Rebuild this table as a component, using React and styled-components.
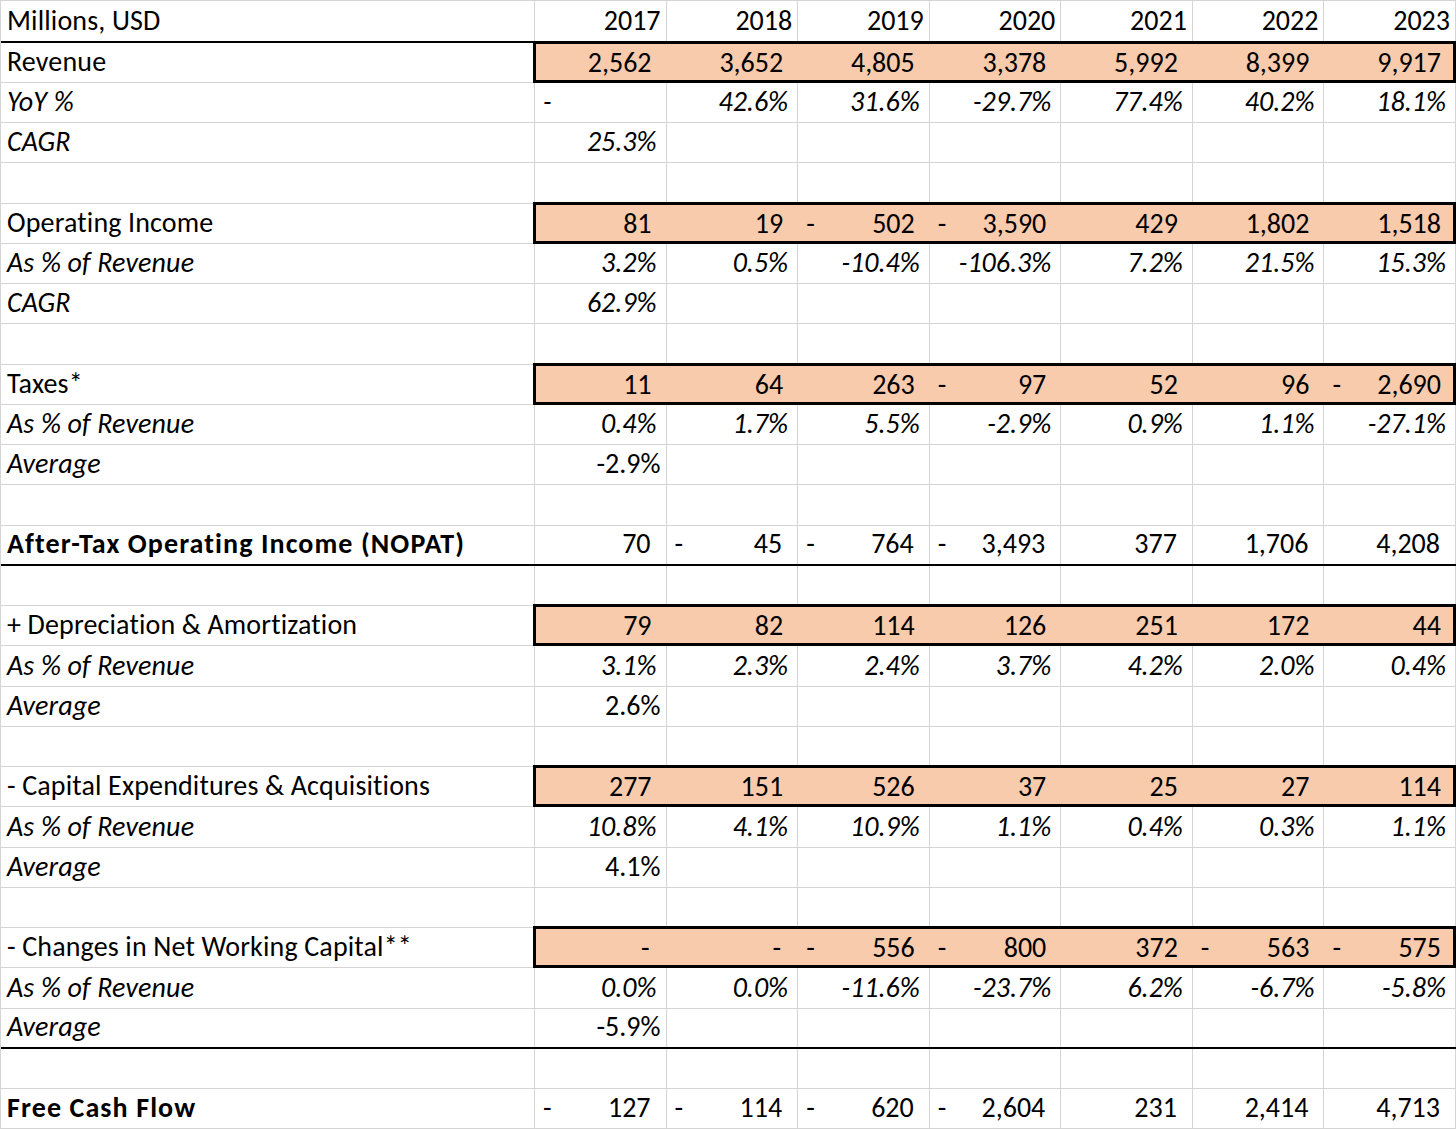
import React from "react";
import styled, { createGlobalStyle } from "styled-components";

const GRID = "#d4d4d4";
const PEACH = "#f8cbad";

const GlobalStyle = createGlobalStyle`
  html, body {
    margin: 0;
    padding: 0;
    background: #fff;
  }
  body {
    font-family: Carlito, Lato, "Open Sans", sans-serif;
    color: #000;
  }
`;

const Sheet = styled.div`
  width: 1456px;
  border-top: 1px solid ${GRID};
  border-left: 1px solid ${GRID};
  box-sizing: border-box;
  font-size: 28px;
`;

const Row = styled.div`
  display: grid;
  grid-template-columns: 534px repeat(7, 1fr);
  height: ${({ $first }) => ($first ? "41.5px" : "40.25px")};
  box-sizing: border-box;
  border-bottom: ${({ $rule }) => ($rule ? "2px solid #000" : `1px solid ${GRID}`)};
`;

const Label = styled.div`
  display: flex;
  align-items: flex-end;
  padding: 0 0 3px 6px;
  border-right: 1px solid ${GRID};
  font-style: ${({ $italic }) => ($italic ? "italic" : "normal")};
  font-weight: ${({ $bold }) => ($bold ? 700 : 400)};
  letter-spacing: ${({ $bold }) => ($bold ? "1.1px" : "0.15px")};
  white-space: nowrap;
`;

const Box = styled.div`
  grid-column: 2 / -1;
  display: grid;
  grid-template-columns: repeat(7, 1fr);
  background: ${PEACH};
  box-shadow: inset 0 0 0 3px #000;
  margin: -2px 0 -1px -2px;
  padding-left: 2px;
`;

const Cell = styled.div`
  display: flex;
  align-items: flex-end;
  justify-content: ${({ $split }) => ($split ? "space-between" : "flex-end")};
  padding: 0 ${({ $right }) => $right}px 3px 8px;
  border-right: ${({ $plain }) => ($plain ? "none" : `1px solid ${GRID}`)};
  font-style: ${({ $italic }) => ($italic ? "italic" : "normal")};
  white-space: nowrap;
  overflow: hidden;
`;

const years = ["2017", "2018", "2019", "2020", "2021", "2022", "2023"];

const rows = [
  { label: "Millions, USD", kind: "year", values: years, rule: true, first: true },
  { label: "Revenue", kind: "acct", box: true, values: ["2,562", "3,652", "4,805", "3,378", "5,992", "8,399", "9,917"] },
  { label: "YoY %", italic: true, kind: "pct", values: ["-", "42.6%", "31.6%", "-29.7%", "77.4%", "40.2%", "18.1%"] },
  { label: "CAGR", italic: true, kind: "pct", values: ["25.3%"] },
  { blank: true },
  { label: "Operating Income", kind: "acct", box: true, values: ["81", "19", "-502", "-3,590", "429", "1,802", "1,518"] },
  { label: "As % of Revenue", italic: true, kind: "pct", values: ["3.2%", "0.5%", "-10.4%", "-106.3%", "7.2%", "21.5%", "15.3%"] },
  { label: "CAGR", italic: true, kind: "pct", values: ["62.9%"] },
  { blank: true },
  { label: "Taxes*", kind: "acct", box: true, values: ["11", "64", "263", "-97", "52", "96", "-2,690"] },
  { label: "As % of Revenue", italic: true, kind: "pct", values: ["0.4%", "1.7%", "5.5%", "-2.9%", "0.9%", "1.1%", "-27.1%"] },
  { label: "Average", italic: true, kind: "avg", values: ["-2.9%"] },
  { blank: true },
  { label: "After-Tax Operating Income (NOPAT)", bold: true, kind: "acct", rule: true, values: ["70", "-45", "-764", "-3,493", "377", "1,706", "4,208"] },
  { blank: true },
  { label: "+ Depreciation & Amortization", kind: "acct", box: true, values: ["79", "82", "114", "126", "251", "172", "44"] },
  { label: "As % of Revenue", italic: true, kind: "pct", values: ["3.1%", "2.3%", "2.4%", "3.7%", "4.2%", "2.0%", "0.4%"] },
  { label: "Average", italic: true, kind: "avg", values: ["2.6%"] },
  { blank: true },
  { label: "- Capital Expenditures & Acquisitions", kind: "acct", box: true, values: ["277", "151", "526", "37", "25", "27", "114"] },
  { label: "As % of Revenue", italic: true, kind: "pct", values: ["10.8%", "4.1%", "10.9%", "1.1%", "0.4%", "0.3%", "1.1%"] },
  { label: "Average", italic: true, kind: "avg", values: ["4.1%"] },
  { blank: true },
  { label: "- Changes in Net Working Capital**", kind: "acct", box: true, values: ["0", "0", "-556", "-800", "372", "-563", "-575"] },
  { label: "As % of Revenue", italic: true, kind: "pct", values: ["0.0%", "0.0%", "-11.6%", "-23.7%", "6.2%", "-6.7%", "-5.8%"] },
  { label: "Average", italic: true, kind: "avg", values: ["-5.9%"], rule: true },
  { blank: true },
  { label: "Free Cash Flow", bold: true, kind: "acct", values: ["-127", "-114", "-620", "-2,604", "231", "2,414", "4,713"] },
];

function ValueCell({ kind, value, plain }) {
  if (value == null) return <Cell $right={6} $plain={plain} />;
  if (kind === "acct") {
    if (value === "0") {
      return (
        <Cell $right={17} $plain={plain}>
          -
        </Cell>
      );
    }
    if (value.startsWith("-")) {
      return (
        <Cell $split $right={15} $plain={plain}>
          <span>-</span>
          <span>{value.slice(1)}</span>
        </Cell>
      );
    }
    return (
      <Cell $right={15} $plain={plain}>
        {value}
      </Cell>
    );
  }
  if (value === "-") {
    return (
      <Cell $split $right={6} $italic={kind === "pct"} $plain={plain}>
        <span>-</span>
      </Cell>
    );
  }
  return (
    <Cell $right={kind === "pct" ? 9 : 5} $italic={kind === "pct"} $plain={plain}>
      {value}
    </Cell>
  );
}

function SheetRow({ row }) {
  if (row.blank) {
    return (
      <Row>
        <Label />
        {years.map((y) => (
          <Cell key={y} $right={6} />
        ))}
      </Row>
    );
  }
  const cells = years.map((y, i) => (
    <ValueCell key={y} kind={row.kind} value={row.values[i]} plain={row.box} />
  ));
  return (
    <Row $rule={row.rule} $first={row.first}>
      <Label $italic={row.italic} $bold={row.bold}>
        {row.label}
      </Label>
      {row.box ? <Box>{cells}</Box> : cells}
    </Row>
  );
}

export default function App() {
  return (
    <>
      <GlobalStyle />
      <Sheet>
        {rows.map((row, i) => (
          <SheetRow key={i} row={row} />
        ))}
      </Sheet>
    </>
  );
}
